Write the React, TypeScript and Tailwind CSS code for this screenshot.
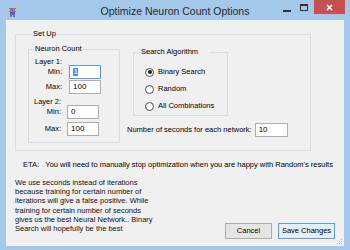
import React from 'react'

function Field({ value, focused, w = 'w-[32px]' }: { value: string; focused?: boolean; w?: string }) {
  return (
    <div
      className={`${w} h-[14px] bg-white border flex items-center pl-[3px] text-[8px] leading-none ${
        focused ? 'border-[#569de5]' : 'border-[#abadb3]'
      }`}
    >
      {focused ? <span className="bg-[#3399ff] text-white px-[0.5px]">{value}</span> : value}
    </div>
  )
}

function Radio({ label, checked }: { label: string; checked?: boolean }) {
  return (
    <div className="flex items-center h-[12px]">
      <div className="w-[9px] h-[9px] rounded-full border border-[#4d4d4d] bg-white flex items-center justify-center">
        {checked && <div className="w-[4px] h-[4px] rounded-full bg-[#1a1a1a]" />}
      </div>
      <span className="ml-[4px]">{label}</span>
    </div>
  )
}

function LabelRow({ label, value, labelW, gap, focused }: { label: string; value: string; labelW: string; gap: string; focused?: boolean }) {
  return (
    <div className="flex items-center">
      <div className={`${labelW} text-right`}>{label}</div>
      <div className={gap}>
        <Field value={value} focused={focused} />
      </div>
    </div>
  )
}

export default function App() {
  return (
    <div className="w-[350px] h-[250px] bg-[#a3c8ea] flex flex-col overflow-hidden relative font-['Liberation_Sans',Arial,sans-serif] text-[7.5px] leading-[10px] text-black">
      {/* title bar */}
      <div className="h-[20px] flex items-start relative shrink-0">
        <svg className="ml-[8px] mt-[6px]" width="9" height="11" viewBox="0 0 9 11">
          <rect x="3" y="0" width="2" height="2" fill="#e8c84a" />
          <rect x="1" y="2" width="7" height="4" fill="#8a6cc4" />
          <rect x="0" y="3" width="2" height="2" fill="#e8c84a" />
          <rect x="7" y="3" width="2" height="2" fill="#e8c84a" />
          <rect x="2" y="6" width="5" height="3" fill="#6b58a8" />
          <rect x="2" y="9" width="2" height="2" fill="#8a6cc4" />
          <rect x="5" y="9" width="2" height="2" fill="#8a6cc4" />
        </svg>
        <div className="absolute left-0 right-0 top-[4px] text-center text-[10.5px] leading-[14px] text-[#2a2a2a]">
          Optimize Neuron Count Options
        </div>
        <div className="ml-auto flex items-start">
          <div className="w-[8px] h-[2px] bg-[#333] mt-[10px] mr-[9px]" />
          <div className="w-[8px] h-[7px] border border-[#333] border-t-2 mt-[4px] mr-[6px]" />
          <div className="w-[31px] h-[14px] bg-[#c75050] flex items-center justify-center mr-[5px]">
            <svg width="7" height="7" viewBox="0 0 7 7">
              <path d="M1 1L6 6M6 1L1 6" stroke="#fff" strokeWidth="1.6" />
            </svg>
          </div>
        </div>
      </div>

      {/* client area */}
      <div className="ml-[6px] mr-[6px] mb-[4px] flex-1 bg-[#f0f0f0] flex flex-col relative">
        <fieldset className="ml-[9px] mt-[9px] w-[296px] h-[122px] border border-[#d5dfe5] pl-[12px] pt-[5px]">
          <legend className="ml-[4px] px-[1px]">Set Up</legend>
          <div className="flex items-start">
            <fieldset className="w-[92px] h-[99px] border border-[#d5dfe5]">
              <legend className="ml-[5px] px-[1px]">Neuron Count</legend>
              <div className="ml-[6px] mt-[4px] leading-[8px] h-[8px]">Layer 1:</div>
              <div className="-mt-[1px]">
                <LabelRow label="Min:" value="1" labelW="w-[33px]" gap="ml-[7px]" focused />
              </div>
              <div className="mt-[1px]">
                <LabelRow label="Max:" value="100" labelW="w-[33px]" gap="ml-[7px]" />
              </div>
              <div className="ml-[5px] mt-[4px] leading-[8px] h-[8px]">Layer 2:</div>
              <div className="-mt-[1px]">
                <LabelRow label="Min:" value="0" labelW="w-[32px]" gap="ml-[6px]" />
              </div>
              <div className="mt-[3px]">
                <LabelRow label="Max:" value="100" labelW="w-[32px]" gap="ml-[6px]" />
              </div>
            </fieldset>

            <div className="flex flex-col">
              <fieldset className="ml-[13px] mt-[3px] w-[95px] h-[69px] border border-[#d5dfe5] pl-[11px]">
                <legend className="ml-[6px] -translate-x-[11px] px-[1px]">Search Algorithm</legend>
                <div className="mt-[9px] flex flex-col gap-[5px]">
                  <Radio label="Binary Search" checked />
                  <Radio label="Random" />
                  <Radio label="All Combinations" />
                </div>
              </fieldset>
              <div className="ml-[7px] mt-[7px] flex items-center">
                <span>Number of seconds for each network:</span>
                <div className="ml-[3px]">
                  <Field value="10" w="w-[33px]" />
                </div>
              </div>
            </div>
          </div>
        </fieldset>

        <div className="ml-[17px] mt-[9px] whitespace-nowrap">
          ETA:&nbsp;&nbsp;&nbsp;You will need to manually stop optimization when you are happy with Random's results
        </div>

        <div className="flex items-start">
          <div className="ml-[9px] mt-[8px] leading-[9.2px] whitespace-nowrap text-[#111]">
            We use seconds instead of iterations
            <br />
            because training for certain number of
            <br />
            iterations will give a false positive. While
            <br />
            training for certain number of seconds
            <br />
            gives us the best Neural Network.. Binary
            <br />
            Search will hopefully be the best
          </div>
          <div className="ml-auto mr-[9px] mt-[53px] flex gap-[6px]">
            <button className="w-[47px] h-[16px] border border-[#acacac] bg-[#e5e5e5] text-[7.5px] leading-none">
              Cancel
            </button>
            <button className="w-[57px] h-[16px] border border-[#5b9fe0] bg-[#e8eef5] text-[7.5px] leading-none">
              Save Changes
            </button>
          </div>
        </div>

        {/* resize grip */}
        <svg className="absolute right-[1px] bottom-[1px]" width="6" height="6" viewBox="0 0 6 6">
          <rect x="4" y="0" width="1" height="1" fill="#b8b8b8" />
          <rect x="2" y="2" width="1" height="1" fill="#b8b8b8" />
          <rect x="4" y="2" width="1" height="1" fill="#b8b8b8" />
          <rect x="0" y="4" width="1" height="1" fill="#b8b8b8" />
          <rect x="2" y="4" width="1" height="1" fill="#b8b8b8" />
          <rect x="4" y="4" width="1" height="1" fill="#b8b8b8" />
        </svg>
      </div>
    </div>
  )
}
